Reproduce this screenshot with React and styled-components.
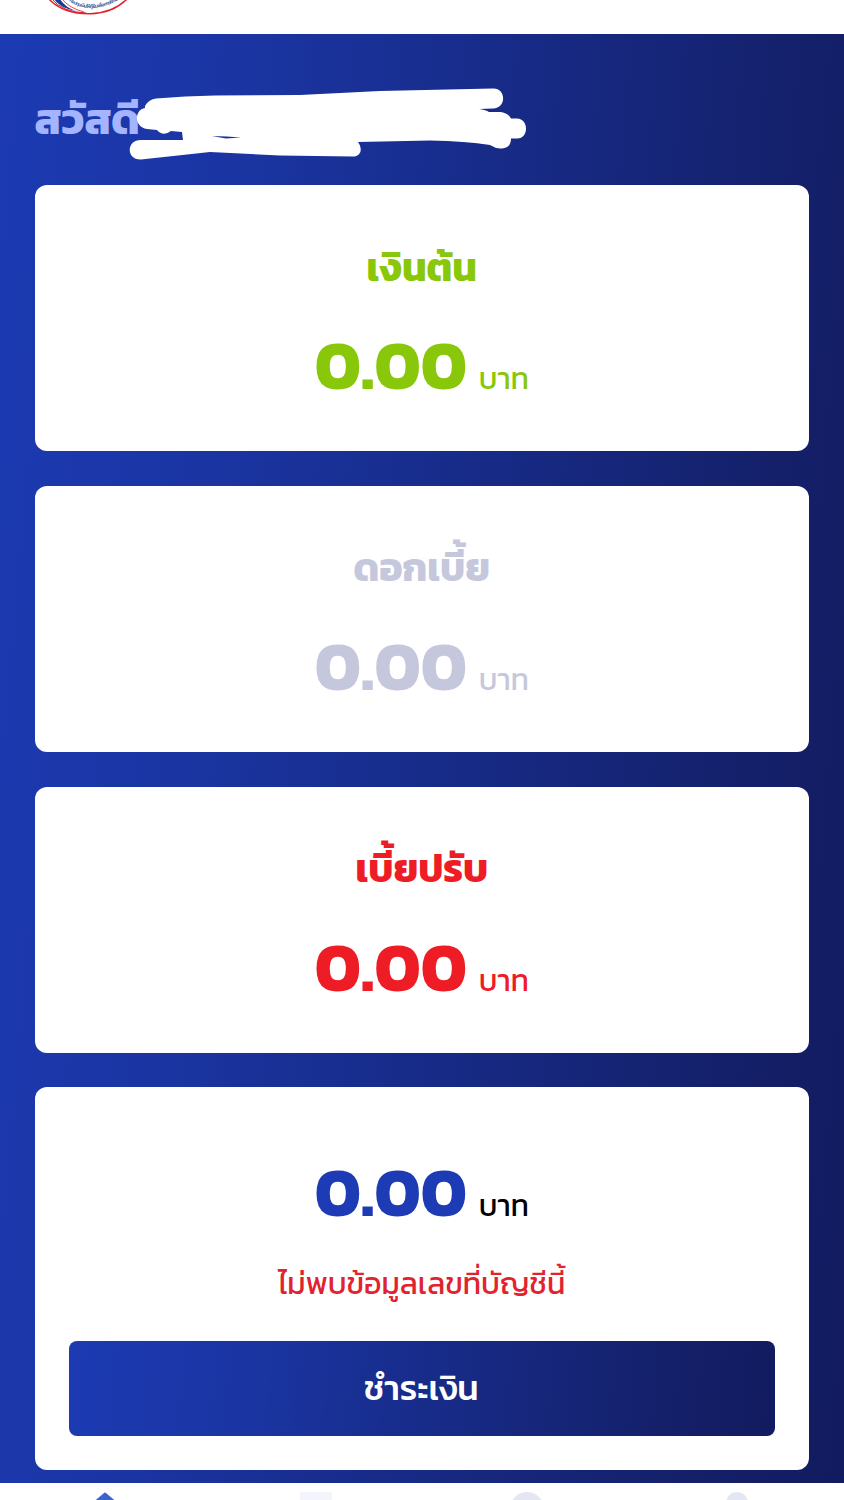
import React from "react";
import styled, { createGlobalStyle } from "styled-components";

const GlobalStyle = createGlobalStyle`
  * {
    box-sizing: border-box;
  }
  body {
    margin: 0;
    background: #fff;
    font-family: Kanit, "Noto Sans Thai", "Noto Sans", sans-serif;
  }
`;

const Page = styled.div`
  display: flex;
  flex-direction: column;
  height: 1500px;
  overflow: hidden;
`;

const Header = styled.header`
  flex: none;
  height: 34px;
  padding-left: 40px;
  background: #fff;

  svg {
    display: block;
  }
`;

const Main = styled.main`
  flex: none;
  display: flex;
  flex-direction: column;
  gap: 35px;
  width: 843.5px;
  height: 1449px;
  padding: 49.4px 34.5px 0;
  background: linear-gradient(95deg, #1c3ab3 0%, #1a34a0 28%, #172b88 52%, #14206a 84%, #121b5f 100%);
`;

const Greeting = styled.div`
  position: relative;
  height: 67px;
  color: #a5b4ff;
  font-size: 43px;
  font-weight: 700;
  line-height: 73px;
  white-space: nowrap;
`;

// hand drawn cover over the user name
const Scribble = styled.svg`
  position: absolute;
  left: 90px;
  top: 0;
`;

const Card = styled.section`
  display: flex;
  flex-direction: column;
  align-items: center;
  height: ${props => props.$total ? "382.5px" : "266px"};
  padding: ${props => props.$total ? "65.4px 34.5px 0" : "49.4px 34.5px 0"};
  border-radius: 12px;
  background: #fff;
  color: ${props => props.$color};
`;

const Cards = styled.div`
  display: flex;
  flex-direction: column;
  gap: 34.7px;
`;

const Title = styled.h2`
  height: 64px;
  margin: 0 0 27.6px;
  font-size: 39px;
  font-weight: 700;
  line-height: 65px;
`;

const Amount = styled.div`
  display: flex;
  align-items: baseline;
  gap: 12px;
  height: 78px;
  line-height: 78px;
`;

const Value = styled.span`
  font-size: 69.3px;
  font-weight: 700;
`;

const Unit = styled.span`
  color: ${props => props.$color || "inherit"};
  font-size: 30px;
`;

const Message = styled.p`
  height: 50px;
  margin: 28.4px 0 32px;
  color: #e0232e;
  font-size: 30.3px;
  line-height: 50px;
`;

const PayButton = styled.button`
  align-self: stretch;
  height: 95px;
  padding: 0 1px 2px 0;
  border: 0;
  border-radius: 8px;
  background: linear-gradient(95deg, #1c3ab3 0%, #1a34a0 28%, #172b88 52%, #14206a 84%, #121b5f 100%);
  color: #fff;
  font: inherit;
  font-size: 34.6px;
  font-weight: 500;
`;

const BottomNav = styled.nav`
  display: grid;
  grid-template-columns: repeat(4, 1fr);
  justify-items: center;
  width: 843.5px;
  height: 17px;
  padding-top: 8px;
  background: #fff;

  svg {
    display: block;
  }
`;

const debts = [
  { title: "เงินต้น", color: "#88c709" },
  { title: "ดอกเบี้ย", color: "#c5c8dc" },
  { title: "เบี้ยปรับ", color: "#ee1c25" },
];

const Logo = () => (
  <svg width="96" height="16" viewBox="0 0 96 16">
    <defs>
      <path id="arc" d="M29 1 Q51 16 80 -1" />
    </defs>
    <path d="M8 -2 Q22 14 50 13.800 Q74 13 88 -2" fill="none" stroke="#e0202c" strokeWidth="1.5" />
    <path d="M12 -1 Q22 12 46 13" fill="none" stroke="#e0202c" strokeWidth="1" />
    <path d="M14 -1 C19 6 26 9 36 11 C28 8 24 5 20 -1Z" fill="#193c8c" />
    <path d="M22 -1 Q29 8 44 12" fill="none" stroke="#e0202c" strokeWidth="0.8" />
    <text fontSize="5" fontWeight="500" fill="#24508f">
      <textPath href="#arc" textLength="54">กองทุนเงินให้กู้ยืมเพื่อการศึกษา</textPath>
    </text>
  </svg>
);

const App = () => {
  return (
    <Page>
      <GlobalStyle />
      <Header>
        <Logo />
      </Header>
      <Main>
        <Greeting>
          สวัสดี
          <Scribble width="410" height="80" viewBox="125 83 410 80">
            <path
              d="M145 106 Q149 99 156 98.500 Q185 96 215 95.500 L300 95 L380 91 L493 88.500 C506 88 507 108 493 108.500 L479 109 Q486 110 489 112 L501 112 Q508 113 511 118.500 L517 118.500 C529 119 529 138.500 517 138.500 L511 138.500 Q511 148 502 148.500 Q496 149 490 145 Q466 141 430 140.500 L358 142 C363 149 361 156 353 156.500 L280 155.500 L210 152 L141 159.500 C126 160 126 140 141 140 L183 140 L182 132 L171 131 Q163 137 157 130 L147 129 C134 127 134 110 145 108Z"
              fill="#fff"
            />
            <path d="M212 136 Q227 136 241 137.500 L226 138.500Z" fill="#1a3197" />
          </Scribble>
        </Greeting>
        <Cards>
          {debts.map(item => (
            <Card key={item.title} $color={item.color}>
              <Title>{item.title}</Title>
              <Amount>
                <Value>0.00</Value>
                <Unit>บาท</Unit>
              </Amount>
            </Card>
          ))}
          <Card $total $color="#1d3bb5">
            <Amount>
              <Value>0.00</Value>
              <Unit $color="#000">บาท</Unit>
            </Amount>
            <Message>ไม่พบข้อมูลเลขที่บัญชีนี้</Message>
            <PayButton>ชำระเงิน</PayButton>
          </Card>
        </Cards>
      </Main>
      <BottomNav>
        <svg width="32" height="30" viewBox="0 0 32 30">
          <path d="M16 2.500 L32 16 H0Z" fill="#3d63cf" stroke="#3d63cf" strokeWidth="2" strokeLinejoin="round" />
        </svg>
        <svg width="32" height="30" viewBox="0 0 32 30">
          <rect y="1" width="32" height="30" rx="2" fill="#f3f4fc" />
        </svg>
        <svg width="36" height="36" viewBox="0 0 36 36">
          <circle cx="18" cy="18" r="17" fill="#e4e6f3" />
        </svg>
        <svg width="24" height="24" viewBox="0 0 24 24">
          <circle cx="11" cy="12" r="11" fill="#e4e6f3" />
        </svg>
      </BottomNav>
    </Page>
  );
};

export default App;
